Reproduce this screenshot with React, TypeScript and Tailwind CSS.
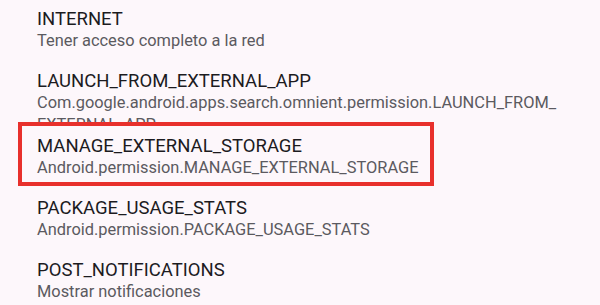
const items = [
  { title: "INTERNET", desc: "Tener acceso completo a la red" },
  {
    title: "LAUNCH_FROM_EXTERNAL_APP",
    desc: "Com.google.android.apps.search.omnient.permission.LAUNCH_FROM_ EXTERNAL_APP",
  },
];

const rest = [
  { title: "PACKAGE_USAGE_STATS", desc: "Android.permission.PACKAGE_USAGE_STATS" },
  { title: "POST_NOTIFICATIONS", desc: "Mostrar notificaciones" },
];

function Permission({ title, desc }: { title: string; desc: string }) {
  return (
    <div className="flex flex-col">
      <p className="text-[18.5px] leading-[22px] text-[#1c1b1f]">{title}</p>
      <p className="w-[545px] text-[16.4px] leading-[22px] text-[#5b5a60]">{desc}</p>
    </div>
  );
}

export default function App() {
  return (
    <div
      className="h-[305px] w-[600px] overflow-hidden bg-[#fdf7fb] pt-[8px]"
      style={{ fontFamily: "Roboto, 'Noto Sans', sans-serif" }}
    >
      <div className="flex flex-col gap-[18px] pl-[37px]">
        {items.map((it) => (
          <Permission key={it.title} {...it} />
        ))}
      </div>
      {/* highlighted permission, drawn over the wrapped line above */}
      <div className="relative z-10 -mt-[14px] ml-[18px] w-[416px] border-4 border-[#e8302c] bg-[#fdf7fb] pb-[3px] pl-[15px] pt-[9px]">
        <Permission title="MANAGE_EXTERNAL_STORAGE" desc="Android.permission.MANAGE_EXTERNAL_STORAGE" />
      </div>
      <div className="mt-[11px] flex flex-col gap-[18px] pl-[37px]">
        {rest.map((it) => (
          <Permission key={it.title} {...it} />
        ))}
      </div>
    </div>
  );
}
